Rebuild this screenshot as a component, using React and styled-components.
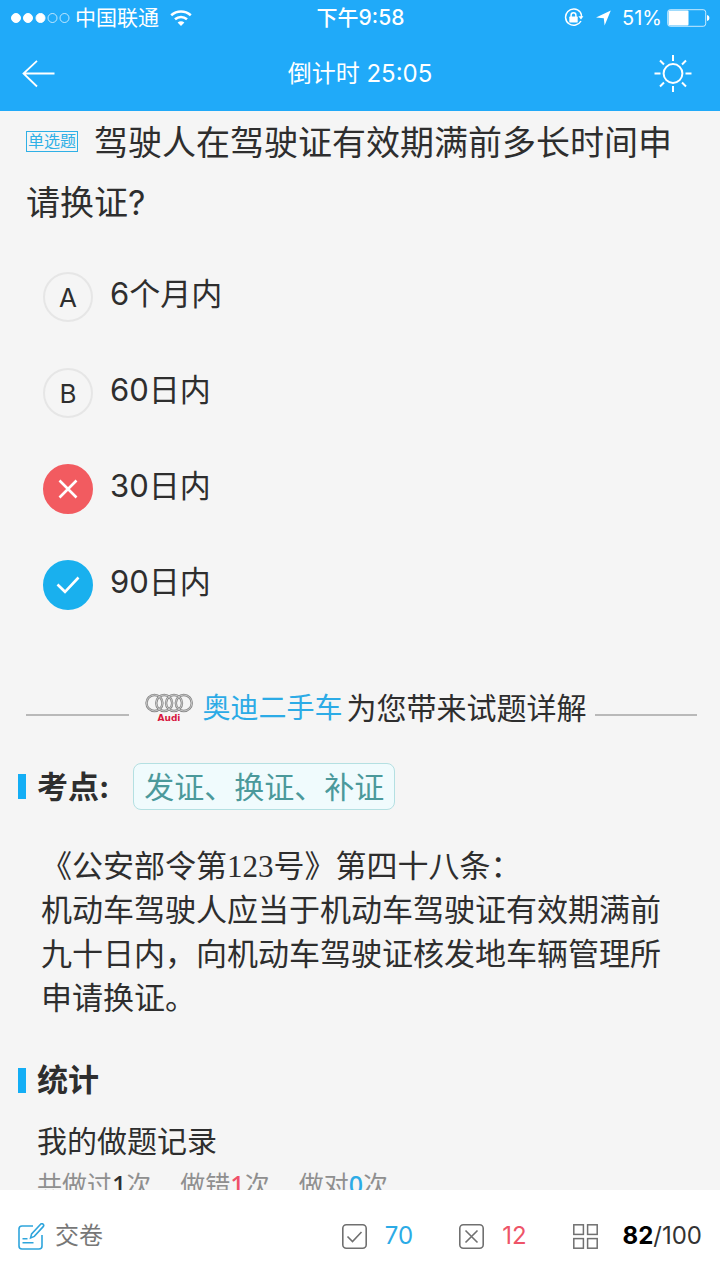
import React, { useState } from 'react';
import styled, { createGlobalStyle } from 'styled-components';

const GlobalStyle = createGlobalStyle`
    * {
        box-sizing: border-box;
    }

    body {
        margin: 0;
        background: #f5f5f5;
        color: #2e2e2e;
        font-family: Inter, "Noto Sans CJK SC", sans-serif;
    }

    button {
        padding: 0;
        border: none;
        background: none;
        color: inherit;
        font: inherit;
        cursor: pointer;
    }

    svg {
        display: block;
        flex: none;
    }
`;

const Page = styled.div`
    display: flex;
    flex-direction: column;
    height: 100vh;
`;

const Header = styled.header`
    flex: none;
    background: #20aaf9;
    color: #fff;
`;

const StatusBar = styled.div`
    display: grid;
    grid-template-columns: 1fr auto 1fr;
    align-items: center;
    height: 36px;
    padding: 0 10px 0 11px;
    font-size: 20px;
    line-height: 24px;

    .time {
        font-size: 21px;
        font-weight: 500;
    }
`;

const StatusGroup = styled.div`
    display: flex;
    align-items: center;
    justify-content: ${props => props.$end ? 'flex-end' : 'flex-start'};
    gap: 5px;
`;

const StatusIcons = styled.div`
    display: flex;
    gap: 12px;
    margin-right: 6px;
`;

const Carrier = styled.span`
    margin-right: 6px;
    font-size: 21px;
`;

const NavBar = styled.div`
    display: grid;
    grid-template-columns: 1fr auto 1fr;
    align-items: center;
    height: 75px;
    padding: 0 22px;

    h1 {
        margin: 0;
        font-size: 24px;
        font-weight: 400;
        line-height: 32px;
    }

    button:last-child {
        justify-self: end;
        padding-right: 6px;
    }
`;

const Content = styled.main`
    flex: 1;
    min-height: 0;
    overflow-y: auto;
    scrollbar-width: none;
`;

const Question = styled.h2`
    margin: 0;
    padding: 2px 26px 0;
    font-size: 34px;
    font-weight: 400;
    line-height: 60px;
`;

const TypeTag = styled.span`
    display: inline-block;
    margin-right: 16px;
    padding: 0 1px;
    border: 1px solid #2fb0e6;
    color: #2fb0e6;
    font-size: 16px;
    line-height: 19px;
    vertical-align: 8px;
`;

const Options = styled.div`
    display: flex;
    flex-direction: column;
    padding: 16px 43px 0;
`;

const OptionRow = styled.label`
    position: relative;
    display: flex;
    align-items: center;
    gap: 17px;
    height: 96px;
    font-size: 31px;
    cursor: pointer;

    input {
        position: absolute;
        opacity: 0;
    }
`;

const badgeColors = {
    wrong: '#f25b60',
    right: '#19b0ee',
};

const Badge = styled.span`
    display: flex;
    align-items: center;
    justify-content: center;
    width: 50px;
    height: 50px;
    border: 2px solid ${props => badgeColors[props.$state] || '#e6e6e6'};
    border-radius: 50%;
    background: ${props => badgeColors[props.$state] || 'transparent'};
    color: ${props => props.$state ? '#fff' : '#2e2e2e'};
    font-size: 26px;
`;

const OptionText = styled.span`
    padding-bottom: 6px;
    line-height: 40px;
`;

const Sponsor = styled.div`
    display: flex;
    align-items: center;
    gap: 8px;
    margin-top: 53px;
    padding: 0 23px 0 26px;
    font-size: 30px;
    line-height: 44px;

    a {
        margin-right: -4px;
        color: #2cabe6;
        font-size: 28px;
        text-decoration: none;
    }
`;

const Rule = styled.span`
    flex: 1;
    height: 2px;
    margin-top: 14px;
    background: #b9b9b9;

    &:first-child {
        margin-right: 8px;
    }
`;

const Section = styled.section`
    padding: ${props => props.$top} 18px 0;
`;

const SectionHead = styled.div`
    display: flex;
    align-items: center;
    gap: 24px;
    min-height: 46px;

    h3 {
        display: flex;
        align-items: center;
        gap: 11px;
        margin: 0;
        font-size: 31px;
        font-weight: 700;
        line-height: 46px;
    }

    h3::before {
        content: '';
        width: 8px;
        height: 25px;
        background: #14aef5;
    }
`;

const TopicTag = styled.button`
    && {
        height: 47px;
        padding: 0 10px;
        border: 1px solid #b4e0e2;
        border-radius: 8px;
        background: #f0fbfd;
        color: #4b999b;
        font-size: 30px;
        line-height: 44px;
    }
`;

const Law = styled.p`
    margin: 35px 0 0;
    padding: 0 23px;
    font-family: "Liberation Serif", "Noto Sans CJK SC", serif;
    font-size: 31px;
    line-height: 44px;
`;

const RecordTitle = styled.h4`
    margin: 16px 0 0 19px;
    font-size: 30px;
    font-weight: 400;
    line-height: 44px;
`;

const RecordList = styled.div`
    display: flex;
    gap: 29px;
    margin: 2px 0 40px 19px;
    color: #8f8f8f;
    font-size: 25px;
    line-height: 38px;
`;

const Count = styled.b`
    color: ${props => props.$color};
    font-family: "Noto Sans", sans-serif;
    font-weight: 500;
`;

const Footer = styled.footer`
    display: flex;
    flex: none;
    align-items: center;
    justify-content: space-between;
    height: 90px;
    padding: 2px 18px 0;
    background: #fff;
    color: #777;
    font-size: 24px;
`;

const FooterStats = styled.div`
    display: flex;
    gap: 46px;
`;

const FooterItem = styled.button`
    display: flex;
    align-items: center;
    gap: ${props => props.$gap};
    line-height: 32px;
`;

const Score = styled.span`
    color: ${props => props.$color};
`;

const Total = styled.span`
    margin-left: 7px;
    color: #333;

    b {
        color: #000;
    }
`;

const SignalIcon = () => (
    <svg width="59" height="12" viewBox="0 0 59 12" fill="#fff" stroke="#fff">
        <circle cx="5" cy="6" r="4.5" />
        <circle cx="17" cy="6" r="4.5" />
        <circle cx="29.5" cy="6" r="4.5" />
        <circle cx="41.5" cy="6" r="4.5" fill="none" strokeOpacity=".7" />
        <circle cx="53.5" cy="6" r="4.5" fill="none" strokeOpacity=".7" />
    </svg>
);

const WifiIcon = () => (
    <svg width="22" height="16" viewBox="0 0 22 16" fill="none" stroke="#fff" strokeWidth="2.6">
        <path d="M1.2 5.2C7 .2 15 .2 20.8 5.2" />
        <path d="M5 9.3c3.6-3 8.4-3 12 0" />
        <path d="M11 16l-3.4-3.6c2-1.7 4.8-1.7 6.8 0z" fill="#fff" stroke="none" />
    </svg>
);

const LockIcon = () => (
    <svg width="20" height="20" viewBox="0 0 20 20" fill="none" stroke="#fff" strokeWidth="1.5">
        <path d="M16.2 4A8.2 8.2 0 1 0 17 13" />
        <path d="M14.4 8.2h5l-2.4 3.4z" fill="#fff" stroke="none" />
        <path d="M16.2 4a8 8 0 0 1 1.300 5" />
        <rect x="5.3" y="8.6" width="8.400" height="6" rx=".6" fill="#fff" stroke="none" />
        <path d="M7.100 9V7.200a2.400 2.400 0 0 1 4.800 0V9" />
    </svg>
);

const LocationIcon = () => (
    <svg width="15" height="20" viewBox="0 0 15 20" fill="#fff">
        <path d="M14.800 2.500L8.600 17.500 7.800 10.300 0 9.400z" />
    </svg>
);

const BatteryIcon = () => (
    <svg width="43" height="18" viewBox="0 0 43 18" fill="none" stroke="#fff">
        <rect x=".7" y=".7" width="38" height="16.6" rx="2.5" strokeOpacity=".75" />
        <rect x="1.5" y="1.5" width="20" height="15" rx="1" fill="#fff" stroke="none" />
        <path d="M40 6c3.2.6 3.2 5.4 0 6z" fill="#fff" stroke="none" />
    </svg>
);

const BackIcon = () => (
    <svg width="33" height="28" viewBox="0 0 33 28" fill="none" stroke="#fff" strokeWidth="1.8">
        <path d="M32.5 13.500H1.500M15 .8L1.500 13.500 15 26.500" />
    </svg>
);

const SunIcon = () => (
    <svg width="38" height="38" viewBox="0 0 38 38" fill="none" stroke="#fff" strokeWidth="2">
        <circle cx="19" cy="18.500" r="9.400" />
        <path d="M19 0v6M19 31v6M.5 18.500h6M31.500 18.500h6M6 5.500l4 4M28 27.500l4 4M6 31.500l4-4M28 9.500l4-4" />
    </svg>
);

const CrossMark = () => (
    <svg width="20" height="20" viewBox="0 0 20 20" fill="none" stroke="#fff" strokeWidth="2.600">
        <path d="M1.500 1.500l17 17M18.500 1.500l-17 17" />
    </svg>
);

const CheckMark = () => (
    <svg width="24" height="18" viewBox="0 0 24 18" fill="none" stroke="#fff" strokeWidth="2.600">
        <path d="M1.500 8.500l7.500 7.300L22.500 1.500" />
    </svg>
);

const AudiLogo = () => (
    <svg width="50" height="30" viewBox="0 0 50 30">
        <g fill="none" stroke="#858585" strokeWidth="2.400">
            <ellipse cx="9.500" cy="10" rx="8" ry="8" />
            <ellipse cx="19.200" cy="10" rx="8" ry="8" />
            <ellipse cx="29" cy="10" rx="8" ry="8" />
            <ellipse cx="38.800" cy="10" rx="8" ry="8" />
        </g>
        <g fill="none" stroke="#d8d8d8" strokeWidth=".8">
            <ellipse cx="9.500" cy="10" rx="8" ry="8" />
            <ellipse cx="19.200" cy="10" rx="8" ry="8" />
            <ellipse cx="29" cy="10" rx="8" ry="8" />
            <ellipse cx="38.800" cy="10" rx="8" ry="8" />
        </g>
        <text x="24" y="28" textAnchor="middle" fontFamily="DejaVu Sans, sans-serif" fontSize="9" fontWeight="700" fill="#d8173f">Audi</text>
    </svg>
);

const SubmitIcon = () => (
    <svg width="27" height="27" viewBox="0 0 27 27" fill="none" stroke="#2fa5dc" strokeWidth="1.600">
        <path d="M15 3H4a3 3 0 0 0-3 3v17a3 3 0 0 0 3 3h17a3 3 0 0 0 3-3V12" />
        <path d="M22.600 1.300a1.700 1.700 0 0 1 2.600 2.300L16.300 13.400l-3.700 1.500 1-4z" />
        <path d="M4.500 15.800h5M4.500 19.800h11" />
    </svg>
);

const BoxIcon = ({ children }) => (
    <svg width="25" height="25" viewBox="0 0 25 25" fill="none" stroke="#707070" strokeWidth="1.600">
        <rect x=".8" y=".8" width="23.400" height="23.400" rx="3.500" />
        {children}
    </svg>
);

const GridIcon = () => (
    <svg width="25" height="25" viewBox="0 0 25 25" fill="none" stroke="#707070" strokeWidth="1.500">
        <rect x=".8" y=".8" width="9.600" height="9.600" />
        <rect x="14.600" y=".8" width="9.600" height="9.600" />
        <rect x=".8" y="14.600" width="9.600" height="9.600" />
        <rect x="14.600" y="14.600" width="9.600" height="9.600" />
    </svg>
);

const options = [
    { key: 'A', text: '6个月内' },
    { key: 'B', text: '60日内' },
    { key: 'C', text: '30日内', state: 'wrong' },
    { key: 'D', text: '90日内', state: 'right' },
];

const records = [
    { label: '共做过', count: 1, color: '#2e2e2e' },
    { label: '做错', count: 1, color: '#f0506a' },
    { label: '做对', count: 0, color: '#2cabe6' },
];

function Option({ option, checked, onSelect }) {
    return (
        <OptionRow>
            <input type="radio" name="answer" checked={checked} onChange={() => onSelect(option.key)} />
            <Badge $state={option.state}>
                {option.state === 'wrong' && <CrossMark />}
                {option.state === 'right' && <CheckMark />}
                {!option.state && option.key}
            </Badge>
            <OptionText>{option.text}</OptionText>
        </OptionRow>
    );
}

export default function App() {
    const [answer, setAnswer] = useState('C');

    return (
        <Page>
            <GlobalStyle />
            <Header>
                <StatusBar>
                    <StatusGroup>
                        <SignalIcon />
                        <Carrier>中国联通</Carrier>
                        <WifiIcon />
                    </StatusGroup>
                    <span className="time">下午9:58</span>
                    <StatusGroup $end>
                        <StatusIcons>
                            <LockIcon />
                            <LocationIcon />
                        </StatusIcons>
                        <span>51%</span>
                        <BatteryIcon />
                    </StatusGroup>
                </StatusBar>
                <NavBar>
                    <button type="button"><BackIcon /></button>
                    <h1>倒计时 25:05</h1>
                    <button type="button"><SunIcon /></button>
                </NavBar>
            </Header>

            <Content>
                <Question>
                    <TypeTag>单选题</TypeTag>
                    驾驶人在驾驶证有效期满前多长时间申请换证?
                </Question>

                <Options>
                    {options.map(option => (
                        <Option
                            key={option.key}
                            option={option}
                            checked={answer === option.key}
                            onSelect={setAnswer} />
                    ))}
                </Options>

                <Sponsor>
                    <Rule />
                    <AudiLogo />
                    <a href="#audi">奥迪二手车</a>
                    <span>为您带来试题详解</span>
                    <Rule />
                </Sponsor>

                <Section $top="33px">
                    <SectionHead>
                        <h3>考点:</h3>
                        <TopicTag type="button">发证、换证、补证</TopicTag>
                    </SectionHead>
                    <Law>
                        《公安部令第123号》第四十八条：<br />
                        机动车驾驶人应当于机动车驾驶证有效期满前九十日内，向机动车驾驶证核发地车辆管理所申请换证。
                    </Law>
                </Section>

                <Section $top="36px">
                    <SectionHead>
                        <h3>统计</h3>
                    </SectionHead>
                    <RecordTitle>我的做题记录</RecordTitle>
                    <RecordList>
                        {records.map(record => (
                            <span key={record.label}>
                                {record.label}<Count $color={record.color}>{record.count}</Count>次
                            </span>
                        ))}
                    </RecordList>
                </Section>
            </Content>

            <Footer>
                <FooterItem type="button" $gap="10px">
                    <SubmitIcon />
                    交卷
                </FooterItem>
                <FooterStats>
                    <FooterItem type="button" $gap="18px">
                        <BoxIcon><path d="M5.5 12.5l5 5 9-9.5" /></BoxIcon>
                        <Score $color="#2cabe6">70</Score>
                    </FooterItem>
                    <FooterItem type="button" $gap="18px">
                        <BoxIcon><path d="M6.5 6.5l12 12M18.5 6.5l-12 12" /></BoxIcon>
                        <Score $color="#ee5468">12</Score>
                    </FooterItem>
                    <FooterItem type="button" $gap="18px">
                        <GridIcon />
                        <Total><b>82</b>/100</Total>
                    </FooterItem>
                </FooterStats>
            </Footer>
        </Page>
    );
}
